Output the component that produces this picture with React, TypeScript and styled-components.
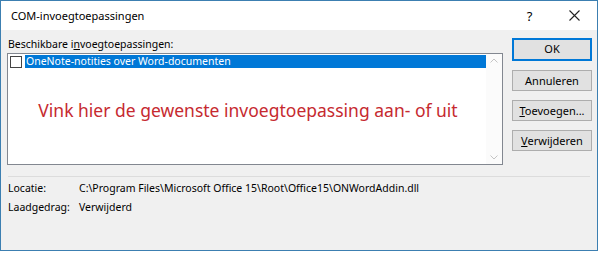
import styled, { createGlobalStyle } from "styled-components";

const Global = createGlobalStyle`
body{
  margin:0;
  background:#fff;
  font-family:"Noto Sans","Open Sans",sans-serif;
}
`;
const Window = styled.div`
width:596px;
height:249px;
border:1px solid #3c7fb1;
display:flex;
flex-direction:column;
background:#f0f0f0;
`;
const TitleBar = styled.div`
height:29px;
background:#fff;
display:flex;
align-items:center;
padding:0 0 0 10px;
font-size:11px;
color:#000;
span:first-child{
  flex:1;
}
`;
const TitleButton = styled.span`
width:45px;
display:flex;
justify-content:center;
align-items:center;
font-size:13px;
`;
const Body = styled.div`
flex:1;
padding:8px 5px 0 6px;
font-size:10.5px;
color:#000;
`;
const Top = styled.div`
display:flex;
gap:9px;
`;
const Main = styled.div`
flex:1;
display:flex;
flex-direction:column;
`;
const Label = styled.div`
height:15px;
line-height:12px;
padding-left:1px;
`;
const ListBox = styled.div`
height:110px;
border:1px solid #828790;
background:#fff;
display:flex;
`;
const ListArea = styled.div`
flex:1;
display:flex;
flex-direction:column;
padding:1px 0 0 2px;
`;
const Row = styled.div`
display:flex;
align-items:center;
height:13px;
`;
const Check = styled.div`
width:12px;
height:12px;
border:1px solid #444;
background:#fff;
margin-right:3px;
box-sizing:border-box;
`;
const Selected = styled.div`
flex:1;
height:13px;
line-height:13px;
background:#0078d7;
color:#fff;
padding-left:1px;
`;
const Note = styled.div`
flex:1;
display:flex;
align-items:center;
justify-content:center;
color:#c62a30;
font-size:17.5px;
padding-bottom:12px;
`;
const Scroll = styled.div`
width:16px;
display:flex;
flex-direction:column;
justify-content:space-between;
align-items:center;
padding:4px 0;
background:#fbfbfb;
color:#c4c4c4;
`;
const Buttons = styled.div`
width:80px;
display:flex;
flex-direction:column;
gap:9px;
`;
const Button = styled.div<{ primary?: boolean }>`
height:19px;
text-align:center;
font-size:11px;
background:#e1e1e1;
border:${(p) => (p.primary ? "2px solid #0078d7" : "1px solid #adadad")};
line-height:${(p) => (p.primary ? "17px" : "19px")};
`;
const Separator = styled.div`
height:1px;
background:#dcdcdc;
margin:11px 2px 4px 1px;
`;
const Info = styled.div`
display:grid;
grid-template-columns:71px 1fr;
row-gap:4px;
line-height:15px;
padding-left:1px;
`;

function Chevron({ up }: { up?: boolean }) {
  return (
    <svg width="8" height="5" viewBox="0 0 8 5">
      <path d={up ? "M0.5 4.5 L4 1 L7.5 4.5" : "M0.5 0.5 L4 4 L7.5 0.5"} fill="none" stroke="currentColor" />
    </svg>
  );
}

function CloseIcon() {
  return (
    <svg width="11" height="11" viewBox="0 0 11 11">
      <path d="M0.5 0.5 L10.5 10.5 M10.5 0.5 L0.5 10.5" stroke="#222" strokeWidth="1.1" />
    </svg>
  );
}

function App() {
  return (
    <>
      <Global />
      <Window>
        <TitleBar>
          <span>COM-invoegtoepassingen</span>
          <TitleButton>?</TitleButton>
          <TitleButton><CloseIcon /></TitleButton>
        </TitleBar>
        <Body>
          <Top>
            <Main>
              <Label>Beschikbare i<u>n</u>voegtoepassingen:</Label>
              <ListBox>
                <ListArea>
                  <Row>
                    <Check />
                    <Selected>OneNote-notities over Word-documenten</Selected>
                  </Row>
                  <Note>Vink hier de gewenste invoegtoepassing aan- of uit</Note>
                </ListArea>
                <Scroll>
                  <Chevron up />
                  <Chevron />
                </Scroll>
              </ListBox>
            </Main>
            <Buttons>
              <Button primary>OK</Button>
              <Button>Annuleren</Button>
              <Button><u>T</u>oevoegen...</Button>
              <Button><u>V</u>erwijderen</Button>
            </Buttons>
          </Top>
          <Separator />
          <Info>
            <span>Locatie:</span>
            <span>C:\Program Files\Microsoft Office 15\Root\Office15\ONWordAddin.dll</span>
            <span>Laadgedrag:</span>
            <span>Verwijderd</span>
          </Info>
        </Body>
      </Window>
    </>
  );
}

export default App;
